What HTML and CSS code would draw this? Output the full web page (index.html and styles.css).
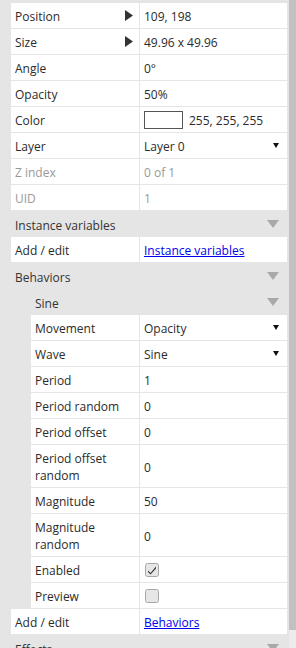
FILE: index.html
```html
<!DOCTYPE html>
<html>
<head>
    <meta charset="utf-8">
    <title>Properties</title>
    <link rel="stylesheet" href="styles.css">
</head>
<body>
    <div class="window">
        <div class="panel">
            <div class="prop">
                <div class="name">Position <svg class="expand" width="8" height="11"><polygon points="0,0 8,5.5 0,11" /></svg></div>
                <div class="val">109, 198</div>
            </div>
            <div class="prop">
                <div class="name">Size <svg class="expand" width="8" height="11"><polygon points="0,0 8,5.5 0,11" /></svg></div>
                <div class="val">49.96 x 49.96</div>
            </div>
            <div class="prop">
                <div class="name">Angle</div>
                <div class="val">0°</div>
            </div>
            <div class="prop">
                <div class="name">Opacity</div>
                <div class="val">50%</div>
            </div>
            <div class="prop">
                <div class="name">Color</div>
                <div class="val"><span class="swatch"></span>255, 255, 255</div>
            </div>
            <div class="prop">
                <div class="name">Layer</div>
                <div class="val select">Layer 0 <svg class="drop" width="6" height="5"><polygon points="0,0 6,0 3,5" /></svg></div>
            </div>
            <div class="prop disabled">
                <div class="name">Z index</div>
                <div class="val">0 of 1</div>
            </div>
            <div class="prop disabled">
                <div class="name">UID</div>
                <div class="val">1</div>
            </div>

            <div class="section">Instance variables <svg class="collapse" width="12" height="8"><polygon points="0,0 12,0 6,8" /></svg></div>
            <div class="prop">
                <div class="name">Add / edit</div>
                <div class="val"><a href="#">Instance variables</a></div>
            </div>

            <div class="section">Behaviors <svg class="collapse" width="12" height="8"><polygon points="0,0 12,0 6,8" /></svg></div>
            <div class="group">
                <div class="section">Sine <svg class="collapse" width="12" height="8"><polygon points="0,0 12,0 6,8" /></svg></div>
                <div class="prop">
                    <div class="name">Movement</div>
                    <div class="val select">Opacity <svg class="drop" width="6" height="5"><polygon points="0,0 6,0 3,5" /></svg></div>
                </div>
                <div class="prop">
                    <div class="name">Wave</div>
                    <div class="val select">Sine <svg class="drop" width="6" height="5"><polygon points="0,0 6,0 3,5" /></svg></div>
                </div>
                <div class="prop">
                    <div class="name">Period</div>
                    <div class="val">1</div>
                </div>
                <div class="prop">
                    <div class="name">Period random</div>
                    <div class="val">0</div>
                </div>
                <div class="prop">
                    <div class="name">Period offset</div>
                    <div class="val">0</div>
                </div>
                <div class="prop">
                    <div class="name">Period offset<br>random</div>
                    <div class="val">0</div>
                </div>
                <div class="prop">
                    <div class="name">Magnitude</div>
                    <div class="val">50</div>
                </div>
                <div class="prop">
                    <div class="name">Magnitude<br>random</div>
                    <div class="val">0</div>
                </div>
                <div class="prop">
                    <div class="name">Enabled</div>
                    <div class="val">
                        <svg class="check" width="14" height="14">
                            <rect x="0.5" y="0.5" width="13" height="13" rx="2" />
                            <path d="M3 7.5 L5.5 10 L11 3.5 L11 5.5 L5.5 11.5 L3 9 Z" />
                        </svg>
                    </div>
                </div>
                <div class="prop">
                    <div class="name">Preview</div>
                    <div class="val">
                        <svg class="check" width="14" height="14">
                            <rect x="0.5" y="0.5" width="13" height="13" rx="2" />
                        </svg>
                    </div>
                </div>
            </div>
            <div class="prop">
                <div class="name">Add / edit</div>
                <div class="val"><a href="#">Behaviors</a></div>
            </div>

            <div class="section">Effects <svg class="collapse" width="12" height="8"><polygon points="0,0 12,0 6,8" /></svg></div>
        </div>
        <div class="scrollbar">
            <div class="thumb"></div>
        </div>
    </div>
</body>
</html>
```

FILE: styles.css
```css
* {
    margin: 0;
    padding: 0;
    box-sizing: border-box;
}

body {
    width: 296px;
    height: 648px;
    overflow: hidden;
    background: #e5e5e5;
    font-family: "Open Sans", "Noto Sans", sans-serif;
    font-size: 12px;
    color: #2b2b2b;
}

.window {
    display: flex;
    height: 648px;
}

.panel {
    width: 289px;
    padding: 3px 2px 0 11px;
}

.prop {
    display: grid;
    grid-template-columns: 129px 1fr;
    background: white;
    border-bottom: 1px solid #e5e5e5;
    line-height: 17px;
}

.group {
    margin-left: 20px;
}

.group .prop {
    grid-template-columns: 109px 1fr;
}

.name, .val {
    display: flex;
    align-items: center;
    padding: 5px 4px 3px;
}

.name {
    justify-content: space-between;
    border-right: 1px solid #e5e5e5;
    padding-right: 6px;
}

.disabled {
    color: #999;
}

.expand {
    margin-top: -2px;
}

.expand polygon {
    fill: #333;
}

.select {
    justify-content: space-between;
    padding-right: 8px;
}

.drop {
    margin-top: -2px;
}

.drop polygon {
    fill: #111;
}

.swatch {
    width: 39px;
    height: 18px;
    border: 1px solid #555;
    background: white;
    margin-top: -2px;
    margin-right: 6px;
}

a {
    color: #0000ee;
    text-decoration: underline;
}

.section {
    display: flex;
    justify-content: space-between;
    align-items: center;
    height: 26px;
    padding: 2px 8px 0 4px;
    color: #333;
}

.collapse {
    margin-top: -2px;
}

.collapse polygon {
    fill: #a9a9a9;
}

.check {
    margin-left: 1px;
    margin-top: -2px;
}

.check rect {
    fill: #e6e6e6;
    stroke: #a6a6a6;
}

.check path {
    fill: #333;
}

.scrollbar {
    width: 7px;
    background: #ececec;
}

.thumb {
    height: 630px;
    background: #c1c1c1;
}
```
